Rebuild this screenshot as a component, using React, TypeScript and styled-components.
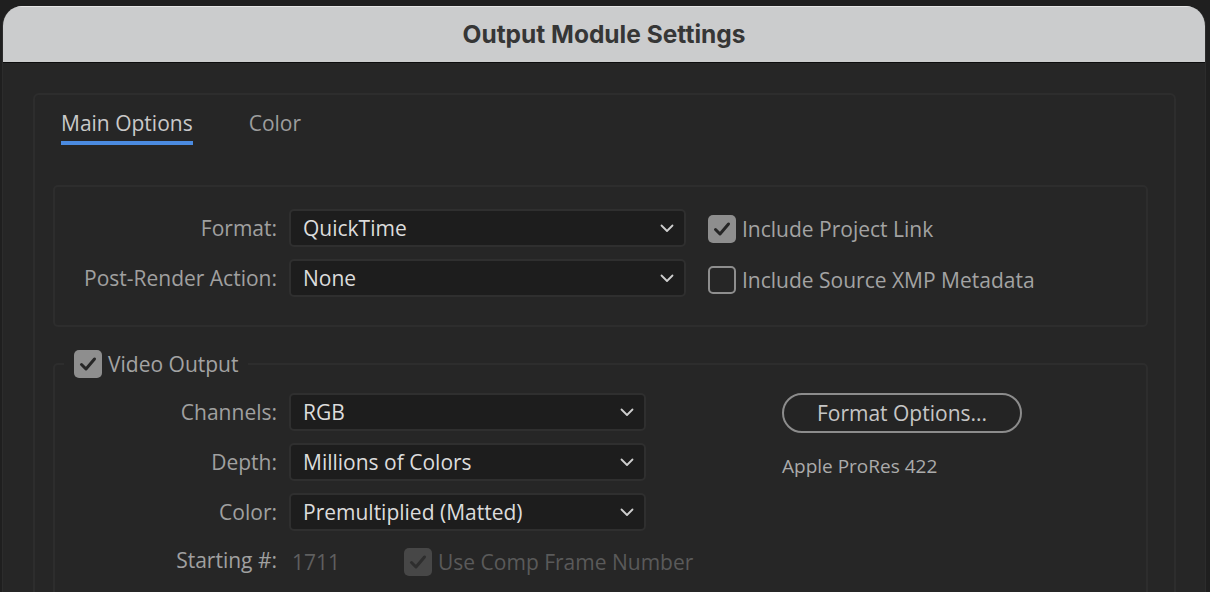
import React from "react";
import styled, { createGlobalStyle } from "styled-components";

const GlobalStyle = createGlobalStyle`
  html, body {
    margin: 0;
    padding: 0;
    background: #1f1f1f;
    overflow: hidden;
  }
  body {
    font-family: "Open Sans", "Noto Sans", sans-serif;
  }
`;

const Window = styled.div`
  margin: 6px 4px 0 2px;
  height: 600px;
  background: #262626;
  border-radius: 20px 20px 0 0;
  border-left: 1px solid #2c2c2c;
  border-right: 1px solid #2c2c2c;
  overflow: hidden;
`;

const TitleBar = styled.div`
  height: 55px;
  background: #cbcccd;
  border-top: 1px solid #e6e6e6;
  box-sizing: border-box;
  border-bottom: 1px solid #0d0d0d;
  height: 57px;
  display: flex;
  align-items: center;
  justify-content: center;
  font-family: Inter, "Liberation Sans", sans-serif;
  font-weight: 700;
  font-size: 24.5px;
  color: #363636;
  padding-bottom: 2px;
`;

const Body = styled.div`
  padding: 30px 29px 0 30px;
`;

const OuterPanel = styled.div`
  border: 2px solid #2d2d2d;
  border-bottom: none;
  border-radius: 6px 6px 0 0;
  padding: 0 26px 0 18px;
  height: 520px;
`;

const Tabs = styled.div`
  display: flex;
  gap: 56px;
  margin-left: 8px;
  height: 90px;
`;

const Tab = styled.div<{ $active?: boolean }>`
  font-size: 21px;
  color: ${(p) => (p.$active ? "#c9c9c9" : "#9d9d9d")};
  padding-top: 14px;
  height: 32px;
  border-bottom: 4px solid ${(p) => (p.$active ? "#4b8be0" : "transparent")};
`;

const Section = styled.div`
  border: 2px solid #2d2d2d;
  border-radius: 5px;
  padding: 22px 0 28px 0;
  display: flex;
  gap: 22px;
`;

const Fieldset = styled.fieldset`
  margin: 23px 0 0 0;
  border: 2px solid #2d2d2d;
  border-radius: 5px;
  padding: 0 0 60px 0;
  min-width: 0;
`;

const Legend = styled.legend`
  margin-left: 9px;
  padding: 0 10px;
  display: flex;
  align-items: center;
  gap: 6px;
  font-size: 21px;
  color: #a3a3a3;
`;

const FieldsetBody = styled.div`
  display: flex;
  gap: 136px;
  padding-top: 15px;
`;

const Form = styled.div`
  display: grid;
  grid-template-columns: 222px ${(p: { $field: number }) => p.$field}px;
  column-gap: 12px;
  row-gap: 12px;
  align-items: center;
`;

const Label = styled.div`
  text-align: right;
  font-size: 21px;
  color: #a0a0a0;
  white-space: nowrap;
`;

const Select = styled.div`
  height: 38px;
  box-sizing: border-box;
  background: #1d1d1d;
  border: 2px solid #2f2f2f;
  border-radius: 5px;
  display: flex;
  align-items: center;
  justify-content: space-between;
  padding: 0 10px 0 12px;
  font-size: 21px;
  color: #dcdcdc;
`;

const StartRow = styled.div`
  display: flex;
  align-items: center;
  gap: 64px;
  margin-top: 5px;
  padding-left: 3px;
  white-space: nowrap;
`;

const DimValue = styled.span`
  font-size: 21px;
  color: #5f5f5f;
`;

const Checks = styled.div`
  display: flex;
  flex-direction: column;
  gap: 23px;
  padding-top: 6px;
`;

const CheckRow = styled.div<{ $disabled?: boolean }>`
  display: flex;
  align-items: center;
  gap: 6px;
  font-size: 21px;
  color: ${(p) => (p.$disabled ? "#5a5a5a" : "#a3a3a3")};
  white-space: nowrap;
`;

const Box = styled.span<{ $checked?: boolean; $disabled?: boolean }>`
  width: 28px;
  height: 28px;
  box-sizing: border-box;
  border-radius: 5px;
  display: inline-flex;
  align-items: center;
  justify-content: center;
  background: ${(p) =>
    p.$disabled ? "#474747" : p.$checked ? "#8e8e8e" : "transparent"};
  border: ${(p) => (p.$checked ? "none" : "2px solid #8e8e8e")};
  flex-shrink: 0;
`;

const Side = styled.div`
  display: flex;
  flex-direction: column;
  align-items: flex-start;
  gap: 20px;
`;

const PillButton = styled.button`
  width: 240px;
  height: 40px;
  border: 2px solid #8c8c8c;
  border-radius: 20px;
  background: #242424;
  font-family: "Open Sans", "Noto Sans", sans-serif;
  font-size: 21px;
  color: #c6c6c6;
  padding: 0;
`;

const Note = styled.div`
  font-size: 19px;
  color: #ababab;
`;

function Chevron() {
  return (
    <svg width="14" height="9" viewBox="0 0 14 9">
      <polyline
        points="1.5,1.5 7,7 12.5,1.5"
        fill="none"
        stroke="#cfcfcf"
        strokeWidth="1.8"
        strokeLinecap="round"
        strokeLinejoin="round"
      />
    </svg>
  );
}

function Check({ color }: { color: string }) {
  return (
    <svg width="18" height="16" viewBox="0 0 18 16">
      <polyline
        points="2.5,8.5 7,13 15.5,3"
        fill="none"
        stroke={color}
        strokeWidth="3"
        strokeLinecap="round"
        strokeLinejoin="round"
      />
    </svg>
  );
}

function Checkbox({ checked, disabled }: { checked?: boolean; disabled?: boolean }) {
  return (
    <Box $checked={checked} $disabled={disabled}>
      {checked && <Check color={disabled ? "#2e2e2e" : "#262626"} />}
    </Box>
  );
}

function Dropdown({ value }: { value: string }) {
  return (
    <Select>
      {value}
      <Chevron />
    </Select>
  );
}

export default function App() {
  return (
    <>
      <GlobalStyle />
      <Window>
        <TitleBar>Output Module Settings</TitleBar>
        <Body>
          <OuterPanel>
            <Tabs>
              <div>
                <Tab $active>Main Options</Tab>
              </div>
              <div>
                <Tab>Color</Tab>
              </div>
            </Tabs>

            <Section>
              <Form $field={397}>
                <Label>Format:</Label>
                <Dropdown value="QuickTime" />
                <Label>Post-Render Action:</Label>
                <Dropdown value="None" />
              </Form>
              <Checks>
                <CheckRow>
                  <Checkbox checked />
                  Include Project Link
                </CheckRow>
                <CheckRow>
                  <Checkbox />
                  Include Source XMP Metadata
                </CheckRow>
              </Checks>
            </Section>

            <Fieldset>
              <Legend>
                <Checkbox checked />
                Video Output
              </Legend>
              <FieldsetBody>
                <Form $field={357}>
                  <Label>Channels:</Label>
                  <Dropdown value="RGB" />
                  <Label>Depth:</Label>
                  <Dropdown value="Millions of Colors" />
                  <Label>Color:</Label>
                  <Dropdown value="Premultiplied (Matted)" />
                  <Label>Starting #:</Label>
                  <StartRow>
                    <DimValue>1711</DimValue>
                    <CheckRow $disabled>
                      <Checkbox checked disabled />
                      Use Comp Frame Number
                    </CheckRow>
                  </StartRow>
                </Form>
                <Side>
                  <PillButton>Format Options...</PillButton>
                  <Note>Apple ProRes 422</Note>
                </Side>
              </FieldsetBody>
            </Fieldset>
          </OuterPanel>
        </Body>
      </Window>
    </>
  );
}
